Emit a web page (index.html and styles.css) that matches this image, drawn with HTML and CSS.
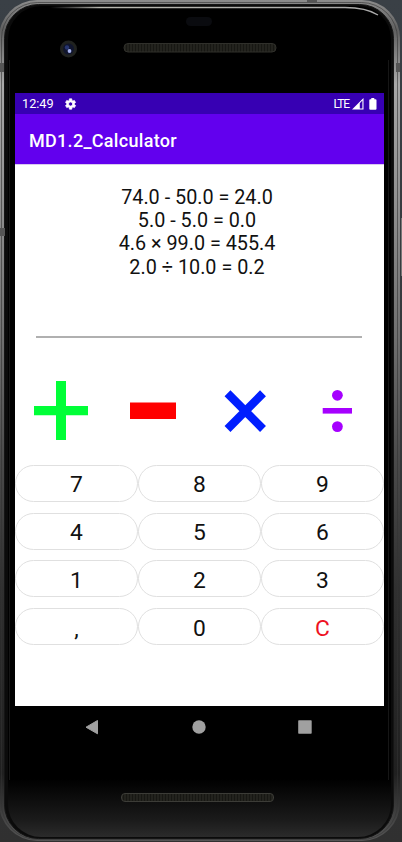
FILE: index.html
```
<!DOCTYPE html>
<html lang="en">
<head>
<meta charset="utf-8">
<title>MD1.2_Calculator</title>
<link rel="stylesheet" href="styles.css">
</head>
<body>
<div class="device">
  <svg class="chassis" width="402" height="842" viewBox="0 0 402 842" aria-hidden="true">
    <defs>
      <linearGradient id="metal" x1="0" y1="0" x2="0" y2="1">
        <stop offset="0" stop-color="#8c8c8c"/><stop offset=".035" stop-color="#606060"/><stop offset=".1" stop-color="#a8a8a8"/><stop offset=".24" stop-color="#909090"/><stop offset=".4" stop-color="#707070"/><stop offset=".55" stop-color="#4a4a4a"/><stop offset=".7" stop-color="#303030"/><stop offset=".92" stop-color="#202020"/><stop offset="1" stop-color="#555"/>
      </linearGradient>
      <linearGradient id="glass" x1="0" y1="0" x2="0" y2="1">
        <stop offset="0" stop-color="#000"/><stop offset=".93" stop-color="#000"/><stop offset=".98" stop-color="#1b1b1b"/><stop offset="1" stop-color="#2b2b2b"/>
      </linearGradient>
      <linearGradient id="shine" x1="0" y1="0" x2="1" y2="0">
        <stop offset="0" stop-color="#aaa" stop-opacity="0"/><stop offset=".15" stop-color="#b8b8b0"/><stop offset="1" stop-color="#aaa"/>
      </linearGradient>
      <linearGradient id="outside" x1="0" y1="0" x2="0" y2="1">
        <stop offset="0" stop-color="#3a4046"/><stop offset="1" stop-color="#303030"/>
      </linearGradient>
      <pattern id="mesh" width="3" height="8" patternUnits="userSpaceOnUse"><rect width="3" height="8" fill="#23231e"/><rect width="1" height="8" fill="#171713"/></pattern>
    </defs>
    <rect width="402" height="842" fill="url(#outside)"/>
    <rect x="-1" y="0" width="401" height="841" rx="38" fill="url(#metal)"/>
    <rect x="1.500" y="2.500" width="396" height="837" rx="36" fill="none" stroke="#333" stroke-opacity=".6"/>
    <rect x="4.500" y="4.500" width="389" height="834" rx="34" fill="#0b0b0b" stroke="#151515"/>
    <rect x="8" y="6" width="383" height="831" rx="33" fill="url(#glass)"/>
    <path d="M388.500 60V780M9.500 60V780" stroke="#161616" fill="none"/>
    <path d="M50 7.500H345Q366 7.500 378 15" fill="none" stroke="url(#shine)" stroke-width="1.300"/>
    <path d="M401.500 218V276" stroke="#777"/>
    <path d="M0 63h4v9H0zM396 63h4v9h-4zM0 228h5v8H0zM307 0h10v3h-10z" fill="#555"/>
    <rect x="186" y="17" width="26" height="9" rx="4.500" fill="#0a0b0f"/>
    <circle cx="68.500" cy="49" r="8.500" fill="#20221f"/>
    <circle cx="68.500" cy="49" r="5.500" fill="#10152d"/>
    <circle cx="67" cy="47.500" r="2.200" fill="#27356f"/>
    <circle cx="69.500" cy="51" r="1.900" fill="#a5b2ef"/>
    <rect x="124" y="43.500" width="152" height="8.500" rx="4" fill="url(#mesh)" stroke="#30302b"/>
    <rect x="121.500" y="793.500" width="152" height="8" rx="3.500" fill="url(#mesh)" stroke="#3c3c37"/>
  </svg>
  <div class="screen">
    <div class="status">
      <span>12:49</span>
      <svg class="gear" width="14" height="14" viewBox="0 0 24 24"><path fill="#fff" fill-rule="evenodd" d="M19.400 13a7 7 0 0 0 0-2l2.100-1.600-2-3.500-2.500 1a7 7 0 0 0-1.700-1L15 3.200h-4l-.4 2.700a7 7 0 0 0-1.700 1l-2.500-1-2 3.500L6.500 11a7 7 0 0 0 0 2l-2.100 1.600 2 3.500 2.500-1a7 7 0 0 0 1.700 1l.4 2.700h4l.4-2.700a7 7 0 0 0 1.700-1l2.500 1 2-3.500zM13 15.600a3.600 3.600 0 1 1 0-7.200 3.600 3.600 0 0 1 0 7.200z" stroke="#fff" stroke-width="1.300"/></svg>
      <span class="lte">LTE</span>
      <svg class="signal" width="12" height="12" viewBox="0 0 12 12"><path fill="#fff" fill-rule="evenodd" d="M0 11.500L11.500 0V11.500zM7.800 5.200V10.500H10.400V2.600z"/></svg>
      <svg class="battery" width="8" height="12" viewBox="0 0 8 12"><path fill="#fff" d="M2.300 0h3v1.300h1.200q1 0 1 1v8.500q0 1-1 1H1.300q-1 0-1-1V2.300q0-1 1-1h1z"/></svg>
    </div>
    <header class="appbar">MD1.2_Calculator</header>
    <main class="content">
      <div class="history">
        <div>74.0 - 50.0 = 24.0</div>
        <div>5.0 - 5.0 = 0.0</div>
        <div>4.6 × 99.0 = 455.4</div>
        <div>2.0 ÷ 10.0 = 0.2</div>
      </div>
      <div class="entry"></div>
      <div class="operators">
        <svg width="92" height="70" viewBox="15 375 92 70"><path fill="#00ff37" d="M56 381h10v25h22v9.300H66V440H56v-24.700H34V406h22z"/></svg>
        <svg width="92" height="70" viewBox="107 375 92 70"><path fill="#f00" d="M130 402.500h46V419h-46z"/></svg>
        <svg width="92" height="70" viewBox="199 375 92 70"><path stroke="#001eff" stroke-width="8.300" d="M227.500 393.300L263 429M263 393.300L227.500 429"/></svg>
        <svg width="92" height="70" viewBox="291 375 92 70"><g fill="#a600ff"><path d="M322.700 408H352v5.600h-29.300z"/><circle cx="337.400" cy="395.300" r="5.400"/><circle cx="337.400" cy="426.600" r="5.400"/></g></svg>
      </div>
      <div class="keys">
        <button>7</button><button>8</button><button>9</button>
        <button>4</button><button>5</button><button>6</button>
        <button>1</button><button>2</button><button>3</button>
        <button>,</button><button>0</button><button class="clear">C</button>
      </div>
    </main>
    <nav class="nav">
      <svg width="16" height="16" viewBox="0 0 16 16"><path fill="#a0a0a0" stroke="#a0a0a0" stroke-linejoin="round" d="M2 8.200L13.500 1.500V14.800z"/></svg>
      <svg width="16" height="16" viewBox="0 0 16 16"><circle cx="8" cy="8" r="6.700" fill="#a0a0a0"/></svg>
      <svg width="16" height="16" viewBox="0 0 16 16"><rect x="1.200" y="1.200" width="13.500" height="13.500" rx=".7" fill="#a0a0a0"/></svg>
    </nav>
  </div>
</div>
</body>
</html>
```
FILE: styles.css
```
* { box-sizing: border-box; }
body { margin: 0; font-family: Roboto, sans-serif; overflow: hidden; }
.device { position: relative; width: 402px; height: 842px; padding: 93px 18px 0 15px; }
.chassis { position: absolute; inset: 0; }
.screen { position: relative; width: 369px; }
.status { height: 21px; background: #3700b3; color: #fff; display: flex; align-items: center; padding: 0 7px; font-size: 12.7px; }
.gear { margin-left: 9px; }
.lte { margin-left: auto; font-size: 12px; letter-spacing: -1.1px; }
.signal { margin-left: 3px; }
.battery { margin-left: 5px; }
.appbar { height: 50px; background: #6200ee; color: #fff; display: flex; align-items: center; padding: 2px 14px 0; font-size: 18px; font-weight: 500; letter-spacing: 0.3px; }
.content { height: 542px; background: #fff; border-top: 1px solid #d9c9f0; padding-top: 21px; }
.history { height: 150px; text-align: center; font-size: 19.8px; line-height: 23.2px; color: #111; padding-right: 5px; }
.entry { height: 2px; margin: 0 22px 0 21px; background: #b0b0b0; }
.operators { display: flex; margin-top: 37px; height: 70px; }
.keys { display: grid; grid-template-columns: repeat(3, 123px); grid-auto-rows: 37px; row-gap: 10.9px; margin-top: 19.7px; }
.keys button { border: 1px solid #e0e0e0; border-radius: 18.5px; background: #fff; color: #111; font: 22.8px Roboto, sans-serif; padding: 3px 0 0; }
.keys .clear { color: #ee1122; }
.nav { height: 42px; display: flex; justify-content: space-between; padding: 13px 71px 0 69px; background: #000; }
```
